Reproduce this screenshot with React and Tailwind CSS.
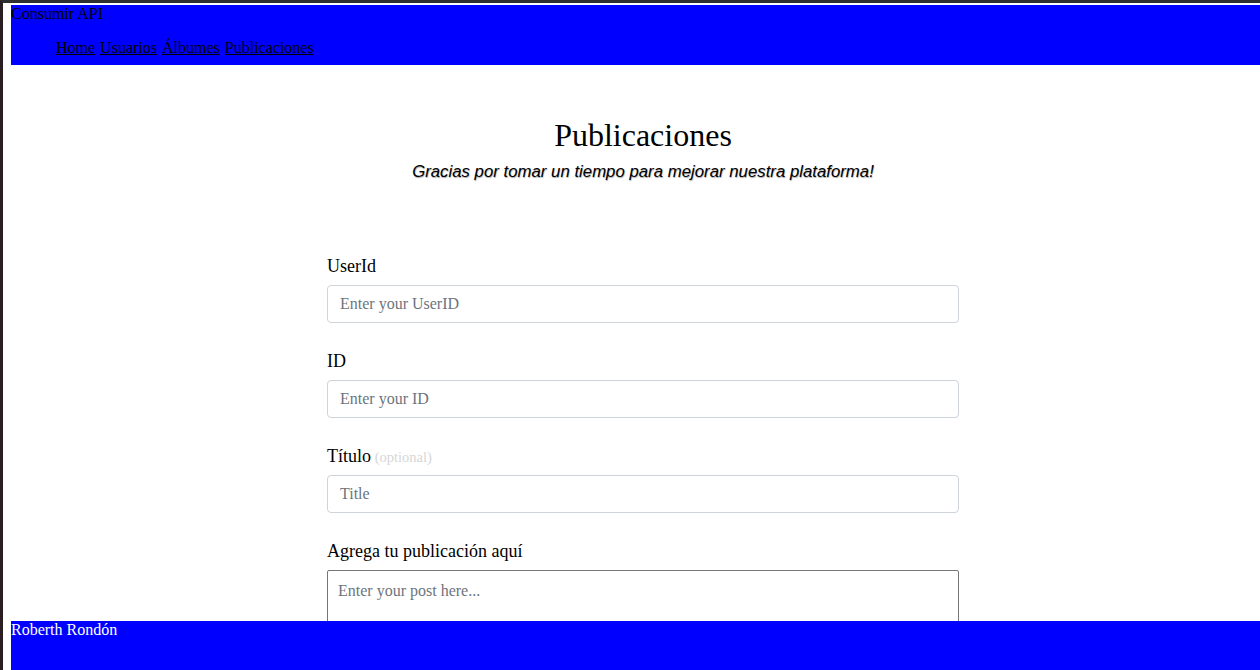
const serif = { fontFamily: '"Liberation Serif", "Times New Roman", serif' }

const NAV = ['Home', 'Usuarios', 'Álbumes', 'Publicaciones']

function Field({ label, optional, placeholder }) {
  return (
    <div className="mb-[26px]">
      <label className="block text-[18px] leading-[25px] mb-[6px] text-black">
        {label}
        {optional && <span className="text-[14.5px] leading-[0] text-[#d6d6d6]"> (optional)</span>}
      </label>
      <input
        type="text"
        placeholder={placeholder}
        className="block w-full h-[38px] px-[12px] border border-[#ced4da] rounded-[4px] text-[16px] placeholder:text-[#6c757d] outline-none"
        style={serif}
      />
    </div>
  )
}

export default function App() {
  return (
    <div
      className="min-h-[670px] bg-white border-l-[3px] border-t-[3px] border-l-[#2a1e22] border-t-[#2f2f2f] pl-[8px] pt-[2px] text-black"
      style={serif}
    >
      <header className="h-[60px] bg-[#0000ff]">
        <div className="text-[16px] leading-[18px]">Consumir API</div>
        <nav className="mt-[16px] pl-[45px] text-[16px] leading-[18px]">
          {NAV.map((n, i) => (
            <span key={n} className={i > 0 ? 'ml-[1px]' : ''}>
              <a href="#" className="underline text-black">{n}</a>
              {i < NAV.length - 1 && ' '}
            </span>
          ))}
        </nav>
      </header>

      <main className="pl-[15px] pb-[120px]">
        <div className="text-center pt-[51px]">
          <h1 className="text-[32px] leading-[1.2]">Publicaciones</h1>
          <p
            className="mt-[4px] text-[16.8px] leading-[27px] italic [text-shadow:0.5px_1px_1px_rgba(0,0,0,0.35)]"
            style={{ fontFamily: '"Liberation Sans", Arial, sans-serif' }}
          >
            Gracias por tomar un tiempo para mejorar nuestra plataforma!
          </p>
        </div>

        <form className="w-[632px] mx-auto mt-[69px]">
          <Field label="UserId" placeholder="Enter your UserID" />
          <Field label="ID" placeholder="Enter your ID" />
          <Field label="Título" optional placeholder="Title" />
          <div>
            <label className="block text-[18px] leading-[25px] mb-[6px]">Agrega tu publicación aquí</label>
            <textarea
              placeholder="Enter your post here..."
              className="block w-full h-[110px] px-[10px] py-[8px] border border-[#767676] rounded-[2px] text-[16px] placeholder:text-[#6c757d] outline-none resize-none"
              style={serif}
            />
          </div>
        </form>
      </main>

      <footer className="fixed bottom-0 left-[11px] right-0 h-[49px] bg-[#0000ff] text-white text-[16px] leading-[18px]">
        Roberth Rondón
      </footer>
    </div>
  )
}
